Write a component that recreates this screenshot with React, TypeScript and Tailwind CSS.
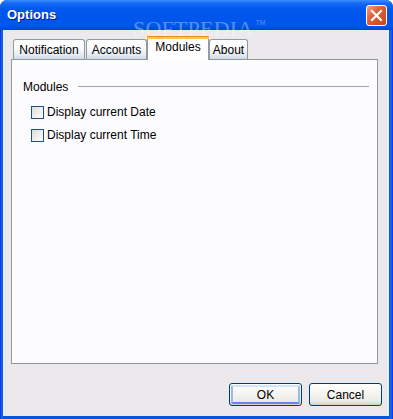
import React from "react";

function Tab({ label, w, selected }: { label: string; w: number; selected?: boolean }) {
  if (selected) {
    return (
      <div
        className="relative z-10 -mb-px h-[24px] flex flex-col rounded-t-[3px] border-x border-[#919B9C] bg-white"
        style={{ width: w }}
      >
        <div className="h-[1px] bg-[#E68B2C] rounded-t-[3px] -mx-px"></div>
        <div className="h-[2px] bg-[#FFC73C] -mx-px"></div>
        <div className="flex-1 flex items-start justify-center pt-[1px] text-[12px] leading-[14px] text-black">{label}</div>
      </div>
    );
  }
  return (
    <div
      className="h-[20px] flex items-center justify-center rounded-t-[3px] border-x border-t border-[#919B9C] bg-[linear-gradient(to_bottom,#ffffff_0%,#fbfcfd_40%,#e8edf4_75%,#cfd9e7_100%)] text-[12px] leading-[14px] text-black pt-[1px]"
      style={{ width: w }}
    >
      {label}
    </div>
  );
}

function Check({ label }: { label: string }) {
  return (
    <div className="flex items-center h-[14px] gap-[3px]">
      <div className="w-[13px] h-[13px] border border-[#1C5180] bg-[linear-gradient(135deg,#dcdcd7_0%,#ececea_45%,#ffffff_100%)]"></div>
      <span className="text-[12px] leading-[14px] text-black">{label}</span>
    </div>
  );
}

function Btn({ label, def }: { label: string; def?: boolean }) {
  return (
    <div className="w-[73px] h-[23px] rounded-[3px] border border-[#003C74] bg-[linear-gradient(to_bottom,#ffffff_0%,#f6f6f3_40%,#ecebe6_80%,#d6d0c5_100%)] p-px">
      <div
        className={
          "w-full h-full rounded-[2px] flex items-center justify-center text-[12px] leading-[14px] text-black " +
          (def ? "border-2 border-[#9BB7EC] border-t-[#CEE7FF] border-b-[#6982EE]" : "")
        }
      >
        {label}
      </div>
    </div>
  );
}

export default function App() {
  return (
    <div className="w-[393px] h-[419px] bg-white">
      <div className="relative w-[393px] h-[419px] flex flex-col rounded-t-[7px] overflow-hidden bg-[linear-gradient(to_right,#0831D9_0px,#166AEE_2px,#0855DD_3px,#0855DD_389px,#166AEE_391px,#0831D9_393px)] font-['Liberation_Sans',Arial,sans-serif]">
        {/* title bar */}
        <div className="h-[30px] shrink-0 flex items-center justify-between pl-[7px] pr-[6px] bg-[linear-gradient(to_bottom,#3A8CFF_0%,#1468F4_12%,#0058EE_30%,#0055EA_60%,#0057F0_85%,#0046D4_100%)]">
          <span className="text-white font-bold text-[13px] leading-[16px] [text-shadow:1px_1px_0_#0A1883]">Options</span>
          <div className="w-[21px] h-[21px] rounded-[3px] border border-white bg-[linear-gradient(135deg,#F0A083_0%,#E2603A_40%,#CC4318_100%)] flex items-center justify-center">
            <svg width="13" height="13" viewBox="0 0 13 13">
              <path d="M2 2 L11 11 M11 2 L2 11" stroke="white" strokeWidth="2.2" strokeLinecap="square" />
            </svg>
          </div>
        </div>
        {/* client */}
        <div className="flex-1 ml-[3px] mr-[4px] mb-[3px] bg-[#ECE9EC] flex flex-col pt-[6px] pl-[8px] pr-[11px] pb-[10px]">
          <div className="flex items-end h-[23px] pl-[2px]">
            <Tab label="Notification" w={72} />
            <div className="w-[1px]"></div>
            <Tab label="Accounts" w={61} />
            <Tab label="Modules" w={62} selected />
            <Tab label="About" w={39} />
          </div>
          <div className="h-[305px] border border-[#919B9C] bg-[#FCFCFE] flex flex-col pl-[11px] pr-[8px] pt-[20px]">
            <div className="flex items-center h-[14px]">
              <span className="text-[12px] leading-[14px] text-black">Modules</span>
              <div className="flex-1 ml-[10px] h-[1px] bg-[#A2A2A2] mt-[-1px]"></div>
            </div>
            <div className="flex flex-col gap-[9px] mt-[11px] pl-[8px]">
              <Check label="Display current Date" />
              <Check label="Display current Time" />
            </div>
          </div>
          <div className="mt-[19px] flex justify-end gap-[7px] -mr-[4px]">
            <Btn label="OK" def />
            <Btn label="Cancel" />
          </div>
        </div>
        {/* watermark */}
        <div className="absolute left-[133px] top-[18px] flex items-start pointer-events-none">
          <span className="font-['Liberation_Serif',serif] text-[22px] leading-[22px] text-white/35 tracking-[0.2px]">SOFTPEDIA</span>
          <span className="font-['Liberation_Sans',sans-serif] text-[7px] leading-[7px] text-white/35 ml-[2px] mt-[1px]">TM</span>
        </div>
      </div>
    </div>
  );
}
